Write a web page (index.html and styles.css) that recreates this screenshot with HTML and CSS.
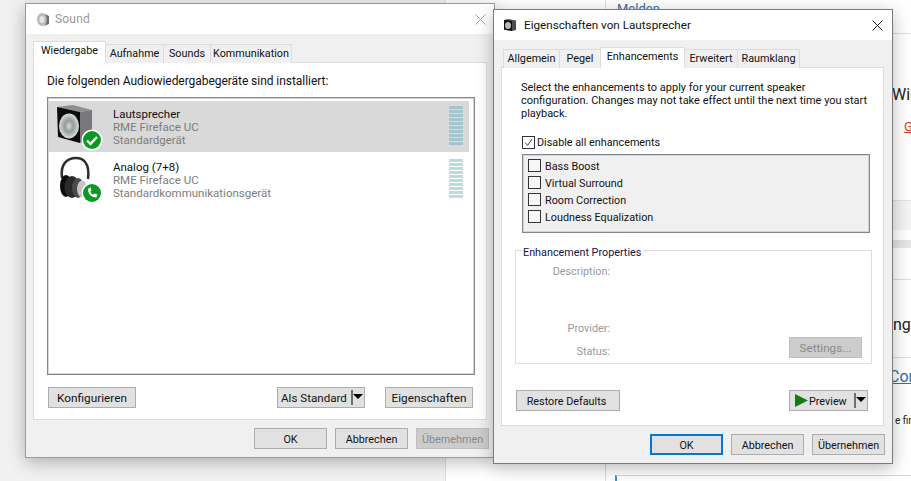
FILE: index.html
```html
<!DOCTYPE html>
<html lang="de">
<head>
<meta charset="utf-8">
<title>Sound</title>
<link rel="stylesheet" href="styles.css">
</head>
<body>
<div class="desktop">
  <div class="bg-left"></div>
  <div class="bg-mid"></div>
  <div class="bg-right">
    <span class="frag melden">Melden</span>
    <span class="frag win">Win</span>
    <span class="frag red">G</span>
    <span class="rule r1"></span>
    <span class="band b1"></span>
    <span class="band b2"></span>
    <span class="rule r2"></span>
    <span class="frag nge">nge</span>
    <span class="rule r3"></span>
    <span class="frag cor">Cor</span>
    <span class="frag fir">e fir</span>
    <span class="foot-rule"></span>
  </div>

  <section class="window sound">
    <header class="titlebar">
      <svg class="title-icon" viewBox="0 0 14 15"><ellipse cx="6" cy="7.5" rx="5" ry="6.5" fill="#b8b8b8"/><ellipse cx="6" cy="7.5" rx="2.6" ry="3.6" fill="#e4e4e4"/><path d="M8 1.5 13 4v8l-5 2c2-2 2.600-4 2.600-6.500S10 3 8 1.500z" fill="#6e6e6e"/></svg>
      <span class="title inactive">Sound</span>
      <svg class="close" viewBox="0 0 11 11"><path d="M.5.5l10 10M10.500.5l-10 10" stroke="#a8a8a8" fill="none"/></svg>
    </header>
    <nav class="tabs">
      <span class="tab active t-wied">Wiedergabe</span>
      <span class="tab t-auf">Aufnahme</span>
      <span class="tab t-sou">Sounds</span>
      <span class="tab t-kom">Kommunikation</span>
    </nav>
    <div class="pane wide">
      <p class="intro">Die folgenden Audiowiedergabegeräte sind installiert:</p>
      <div class="devices">
        <div class="device selected">
          <svg class="device-icon" viewBox="0 0 64 51">
            <defs>
              <radialGradient id="cone"><stop offset="0" stop-color="#d4d8d8"/><stop offset=".45" stop-color="#969c9c"/><stop offset=".7" stop-color="#b4b8b8"/><stop offset="1" stop-color="#dcdede"/></radialGradient>
            </defs>
            <path d="M8 6 24 4 43 9 31 11z" fill="#8f8f92"/>
            <path d="M31 11 43 9V36L31 42z" fill="#77777c"/>
            <path d="M8 6 31 11V42L9 36z" fill="#0c0c0c"/>
            <ellipse cx="20" cy="25" rx="10" ry="12.500" fill="url(#cone)"/>
            <circle cx="43" cy="39" r="10.500" fill="#fff"/>
            <circle cx="43" cy="39" r="9" fill="#0a9a22"/>
            <path d="M38 39.500l3.500 3.500 6.500-7" stroke="#fff" stroke-width="2.400" fill="none"/>
          </svg>
          <div class="device-text">
            <strong>Lautsprecher</strong>
            <span>RME Fireface UC</span>
            <span>Standardgerät</span>
          </div>
          <div class="meter"><i></i><i></i><i></i><i></i><i></i><i></i><i></i><i></i><i></i><i></i></div>
        </div>
        <div class="device">
          <svg class="device-icon" viewBox="0 0 64 51">
            <path d="M13 25C11 10 19 5 27 5C35 5 41 11 39 26" stroke="#2e2e2e" stroke-width="2.500" fill="none"/>
            <ellipse cx="17" cy="33" rx="6" ry="11" fill="#0c0c0c"/>
            <ellipse cx="23" cy="34" rx="7.500" ry="11" fill="#2a2a2a"/>
            <ellipse cx="29" cy="35" rx="6" ry="10" fill="#4a4a4a"/>
            <ellipse cx="33" cy="36" rx="5" ry="8.500" fill="#c4c4c4"/>
            <circle cx="43" cy="40" r="10.500" fill="#fff"/>
            <circle cx="43" cy="40" r="9" fill="#0a9a22"/>
            <path d="M39 36c0 5 3.500 8.500 8.500 8.500l1-3-3-1-1.200 1.200c-1.500-.7-2.400-1.700-3-3.200l1.200-1.200-1-3z" fill="#fff"/>
          </svg>
          <div class="device-text">
            <strong>Analog (7+8)</strong>
            <span>RME Fireface UC</span>
            <span>Standardkommunikationsgerät</span>
          </div>
          <div class="meter"><i></i><i></i><i></i><i></i><i></i><i></i><i></i><i></i><i></i><i></i></div>
        </div>
      </div>
      <div class="pane-actions spaced">
        <button class="btn wide-btn">Konfigurieren</button>
        <span class="spacer"></span>
        <button class="btn split std"><span>Als Standard</span><b class="caret"></b></button>
        <button class="btn wide-btn">Eigenschaften</button>
      </div>
    </div>
    <footer class="footer">
      <button class="btn">OK</button>
      <button class="btn">Abbrechen</button>
      <button class="btn disabled">Übernehmen</button>
    </footer>
  </section>

  <section class="window props">
    <header class="titlebar">
      <svg class="title-icon dark" viewBox="0 0 14 14"><path d="M1 2 5 1 13 2.500V12L9 13 1 11.500z" fill="#4c4c4e"/><path d="M1 2 9 3V13L1 11.500z" fill="#111"/><ellipse cx="5" cy="7.500" rx="3" ry="3.500" fill="#b4baba"/></svg>
      <span class="title">Eigenschaften von Lautsprecher</span>
      <svg class="close" viewBox="0 0 11 11"><path d="M.5.5l10 10M10.500.5l-10 10" stroke="#1a1a1a" fill="none"/></svg>
    </header>
    <nav class="tabs">
      <span class="tab t-all">Allgemein</span>
      <span class="tab t-peg">Pegel</span>
      <span class="tab active t-enh">Enhancements</span>
      <span class="tab t-erw">Erweitert</span>
      <span class="tab t-rau">Raumklang</span>
    </nav>
    <div class="pane">
      <p class="desc">Select the enhancements to apply for your current speaker configuration. Changes may not take effect until the next time you start playback.</p>
      <label class="check master"><i class="box on"><svg viewBox="0 0 13 13"><path d="M2.500 6.500l3 3.500 5-7.500" stroke="#222" fill="none"/></svg></i>Disable all enhancements</label>
      <div class="options">
        <label class="check"><i class="box"></i>Bass Boost</label>
        <label class="check"><i class="box"></i>Virtual Surround</label>
        <label class="check"><i class="box"></i>Room Correction</label>
        <label class="check"><i class="box"></i>Loudness Equalization</label>
      </div>
      <fieldset class="group">
        <legend>Enhancement Properties</legend>
        <div class="prop first"><span>Description:</span></div>
        <div class="prop second"><span>Provider:</span></div>
        <div class="prop third"><span>Status:</span><button class="btn disabled settings">Settings...</button></div>
      </fieldset>
      <div class="pane-actions props-actions">
        <button class="btn restore">Restore Defaults</button>
        <span class="spacer"></span>
        <button class="btn split preview"><svg class="play" viewBox="0 0 13 13"><path d="M0 0 13 6.500 0 13z" fill="#157a12"/></svg><span>Preview</span><b class="caret"></b></button>
      </div>
    </div>
    <footer class="footer">
      <button class="btn default">OK</button>
      <button class="btn">Abbrechen</button>
      <button class="btn">Übernehmen</button>
    </footer>
  </section>
</div>
</body>
</html>
```

FILE: styles.css
```css
* { box-sizing: border-box; }
html, body { margin: 0; padding: 0; }
body {
  width: 911px;
  height: 481px;
  overflow: hidden;
  font: 10.800px/13px Roboto, sans-serif;
  color: #111;
  background: #fff;
}
.desktop { position: relative; width: 911px; height: 481px; display: flex; overflow: hidden; }
.bg-left { width: 445px; background: #f1f1f1; }
.bg-mid { width: 161px; background: #fff; border-left: 1px solid #dcdcdc; border-right: 1px solid #dcdcdc; }
.bg-right { position: relative; flex: 1; background: #fff; }

.frag { position: absolute; white-space: nowrap; }
.melden { left: 11px; top: 2px; font-size: 13px; color: #3b6ea5; }
.win { left: 286px; top: 86px; font-size: 16px; line-height: 18px; color: #222; }
.red { left: 298px; top: 120px; font-size: 13px; color: #d9362a; text-decoration: underline; }
.rule { position: absolute; left: 0; right: 0; height: 1px; background: #dfdfdf; }
.r1 { top: 33px; }
.r2 { top: 279px; }
.r3 { top: 357px; }
.band { position: absolute; left: 0; right: 0; background: #f3f3f3; border-top: 1px solid #e2e2e2; }
.b1 { top: 200px; height: 30px; }
.b2 { top: 240px; height: 8px; background: #e6e6e6; }
.nge { left: 287px; top: 316px; font-size: 16px; line-height: 18px; color: #222; }
.cor { left: 283px; top: 368px; font-size: 16px; line-height: 18px; color: #2a6fb0; text-decoration: underline; }
.fir { left: 289px; top: 414px; font-size: 10px; color: #222; }
.foot-rule { position: absolute; left: 9px; right: 0; top: 475px; height: 6px; border-top: 1px solid #cfd8e4; border-left: 2px solid #3a96e0; }

.window {
  position: absolute;
  display: flex;
  flex-direction: column;
  background: #f0f0f0;
  border: 1px solid #7b7b7b;
  box-shadow: 0 4px 16px rgba(0, 0, 0, .28);
}
.sound { left: 25px; top: 3px; width: 470px; height: 455px; border-color: #9a9a9a; padding: 0 0 0 7px; }
.props { left: 493px; top: 9px; width: 400px; height: 455px; padding: 0 8px 0 7px; }

.titlebar { display: flex; align-items: center; background: #fff; margin: 0 0 0 -7px; }
.sound .titlebar { height: 30px; padding: 0 8px 0 10px; }
.props .titlebar { height: 30px; padding: 0 9px 0 9px; margin-right: -8px; }
.title-icon { width: 14px; height: 15px; flex: none; }
.title-icon.dark { width: 14px; height: 14px; }
.title { margin-left: 5px; font-size: 12px; flex: 1; }
.sound .title { letter-spacing: .2px; }
.props .title { margin-left: 7px; font-size: 11.700px; }
.inactive { color: #999; }
.close { width: 11px; height: 11px; flex: none; }

.tabs { display: flex; align-items: flex-end; position: relative; z-index: 1; margin-bottom: -1px; }
.sound .tabs { margin-top: 7px; height: 22px; }
.props .tabs { margin-top: 7px; padding-left: 2px; height: 21px; }
.tab {
  height: 19px;
  background: #f0f0f0;
  border: 1px solid #dcdcdc;
  border-bottom: 0;
  margin-left: -1px;
  text-align: center;
  line-height: 18px;
  white-space: nowrap;
}
.tab:first-child { margin-left: 0; }
.tab.active { height: 22px; background: #fff; border-bottom: 1px solid #fff; line-height: 17px; position: relative; z-index: 2; }
.props .tab.active { height: 21px; }
.t-wied { width: 73px; }
.t-auf { width: 59px; }
.t-sou { width: 48px; }
.t-kom { width: 82px; }
.t-all { width: 57px; }
.t-peg { width: 42px; }
.t-enh { width: 85px; }
.t-erw { width: 54px; }
.t-rau { width: 63px; }

.pane { background: #fff; border: 1px solid #dcdcdc; }
.sound .pane { width: 454px; height: 358px; padding: 10px 12px 0 13px; }
.props .pane { width: 383px; height: 359px; padding: 13px 10px 0 19px; }
.intro { margin: 0 0 8px; line-height: 16px; font-size: 12px; letter-spacing: -.05px; }

.devices { width: 428px; height: 278px; border: 1px solid #83858f; box-shadow: inset 0 0 0 1px #d4d5d9; padding: 3px 1px; }
.device { display: flex; height: 51px; margin-bottom: 2px; width: 420px; }
.device.selected { background: #d9d9d9; }
.device-icon { width: 64px; height: 51px; flex: none; }
.device + .device .device-icon { margin-top: -1px; }
.device-text { display: flex; flex-direction: column; padding-top: 7px; color: #7d7d7d; flex: 1; font-size: 11.500px; }
.device-text strong { font-weight: 400; color: #111; }
.meter { display: flex; flex-direction: column; gap: 1px; width: 14px; margin: 5px 6px 0 0; }
.meter i { display: block; height: 3px; background: #bcdce2; }
.selected .meter i { background: #a5c4cc; }

.btn {
  display: inline-flex;
  align-items: center;
  justify-content: center;
  width: 73px;
  height: 21px;
  padding: 1px 0 0;
  font: inherit;
  color: #111;
  background: #e1e1e1;
  border: 1px solid #adadad;
  border-radius: 0;
  white-space: nowrap;
}
.btn.disabled { background: #ccc; border-color: #bfbfbf; color: #8a8a8a; }
.btn.default { border: 2px solid #0078d7; }
.wide-btn { width: 88px; font-size: 11.800px; }
.pane-actions { display: flex; align-items: flex-start; }
.spacer { flex: 1; }
.spaced { margin: 12px 0 0 1px; width: 425px; }
.std { width: 88px; margin-right: 20px; justify-content: flex-start; padding-left: 3px; font-size: 11.600px; }
.split { position: relative; }
.caret { position: absolute; right: 0; top: 2px; bottom: 2px; width: 13px; border-left: 2px solid #6f6f6f; }
.caret::after { content: ""; position: absolute; left: 0; top: 4px; border: 5px solid transparent; border-top: 5px solid #000; border-bottom: 0; }
.preview { width: 79px; justify-content: flex-start; padding-left: 5px; }
.preview span { margin-left: 1px; }
.play { width: 13px; height: 13px; flex: none; margin-top: -1px; }
.restore { width: 104px; padding-right: 3px; }

.footer { display: flex; gap: 8px; justify-content: flex-end; }
.sound .footer { margin-top: 8px; padding-right: 5px; }
.props .footer { margin-top: 8px; margin-right: -1px; }

.desc { margin: 0 0 16px; width: 352px; font-size: 11px; }
.check { display: flex; align-items: center; height: 17px; padding-top: 2px; }
.box { display: block; width: 13px; height: 13px; border: 1px solid #333; background: #fff; margin: -2px 4px 0 0; flex: none; }
.options .box { background: #f7f7f7; }
.box svg { display: block; width: 11px; height: 11px; }
.master { margin-left: 1px; margin-bottom: 3px; margin-top: -2px; padding-top: 0; }
.master .box { margin: 0 2px 0 0; }
.options { width: 348px; height: 79px; margin-left: 1px; background: #f0f0f0; border: 1px solid #83858f; box-shadow: inset 0 0 0 1px #d4d5d9; padding: 2px 0 0 5px; }
.group { position: relative; width: 357px; height: 114px; margin: 17px 0 0 -6px; padding: 0; border: 1px solid #dcdcdc; }
.group legend { margin-left: 6px; padding: 0 2px 0 1px; line-height: 13px; position: absolute; top: -5px; background: #fff; color: #14144a; }
.prop { display: flex; color: #9a9a9a; }
.prop > span { width: 94px; text-align: right; }
.first { padding-top: 14px; height: 71px; }
.second { height: 23px; }
.settings { margin: -8px 9px 0 auto; font-size: 11.700px; }
.props-actions { margin: 26px 0 0 -5px; width: 352px; }
```
